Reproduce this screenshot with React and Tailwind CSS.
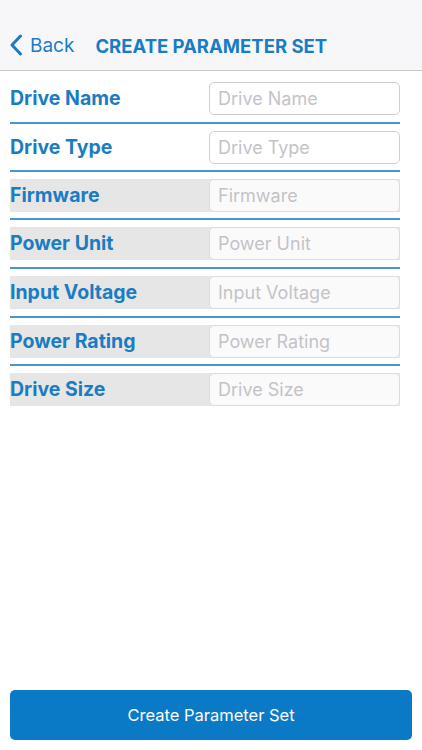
import React from "react";

const fields = [
  { label: "Drive Name", gray: false, pb: "pb-[7px]" },
  { label: "Drive Type", gray: false, pb: "pb-[6px]" },
  { label: "Firmware", gray: true, pb: "pb-[6px]" },
  { label: "Power Unit", gray: true, pb: "pb-[7px]" },
  { label: "Input Voltage", gray: true, pb: "pb-[7px]" },
  { label: "Power Rating", gray: true, pb: "pb-[6px]" },
  { label: "Drive Size", gray: true, pb: "pb-[6px]" },
];

export default function App() {
  return (
    <div
      className="flex flex-col h-screen bg-white"
      style={{ fontFamily: "Inter, 'Liberation Sans', sans-serif" }}
    >
      <div className="h-[71px] bg-[#f7f7f9] border-b border-[#c9c9cc] flex items-end pb-[14px]">
        <div className="flex items-center pl-[9px]">
          <svg width="14" height="22" viewBox="0 0 14 22" className="mr-[7px]">
            <path d="M11.5 2 L3 11 L11.5 20" fill="none" stroke="#1a7cc3" strokeWidth="3" strokeLinecap="round" strokeLinejoin="round" />
          </svg>
          <span className="text-[19px] text-[#1a7cc3] leading-none">Back</span>
        </div>
        <div className="ml-[21px] text-[18.5px] font-bold text-[#1a7cc3] leading-none mb-[1px]">
          CREATE PARAMETER SET
        </div>
      </div>
      <div className="px-[10px] pt-[4px] pr-[22px]">
        {fields.map((f, i) => (
          <div key={f.label}>
            <div className={"pt-[7px] " + f.pb}>
              <div className={"flex items-center h-[33px] " + (f.gray ? "bg-[#e6e6e6]" : "")}>
                <div className="flex-1 text-[19.5px] font-bold text-[#1a7cc3] leading-none">
                  {f.label}
                </div>
                <div
                  className={
                    "w-[191px] h-[33px] rounded-[5px] border flex items-center px-[8px] text-[18px] text-[#c3c3c8] " +
                    (f.gray ? "bg-[#fafafa] border-[#dcdcdc]" : "bg-white border-[#cfcfd2]")
                  }
                >
                  {f.label}
                </div>
              </div>
            </div>
            {i < fields.length - 1 && <div className="h-[2px] bg-[#4a95d0]" />}
          </div>
        ))}
      </div>
      <div className="flex-1" />
      <div className="px-[10px] pb-[10px]">
        <button className="w-full h-[50px] rounded-[5px] bg-[#0a7ac6] text-white text-[16.5px]">
          Create Parameter Set
        </button>
      </div>
    </div>
  );
}
